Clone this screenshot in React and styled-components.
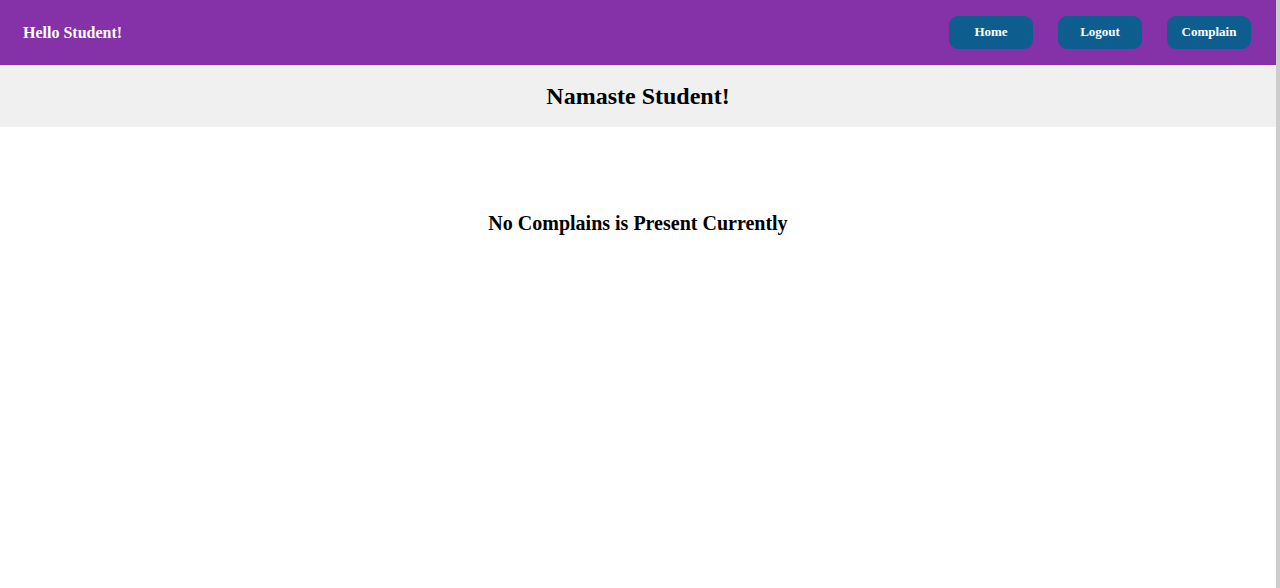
import styled, { createGlobalStyle } from 'styled-components';

const GlobalStyle = createGlobalStyle`
    html {
        background: #cdcdcd;
    }
    body {
        margin: 0;
        width: 1276px;
        min-height: 588px;
        background: #fff;
        font-family: "Liberation Serif", "Times New Roman", serif;
    }
`;

const NavBar = styled.nav`
    display: flex;
    align-items: center;
    justify-content: space-between;
    height: 65px;
    padding: 0 25px 0 23px;
    box-sizing: border-box;
    background-color: #8531a8;
`;

const Greeting = styled.div`
    color: #fff;
    font-size: 16px;
    font-weight: bold;
`;

const NavButtons = styled.div`
    display: flex;
    gap: 25px;
    margin-top: -1px;
`;

const NavButton = styled.button`
    width: 84px;
    height: 33px;
    border: none;
    border-radius: 9px;
    background-color: #0e5d8f;
    color: #fff;
    font-family: inherit;
    font-size: 13px;
    font-weight: bold;
    cursor: pointer;
`;

const Banner = styled.div`
    display: flex;
    align-items: center;
    justify-content: center;
    height: 62px;
    background-color: #f0f0f0;
`;

const BannerTitle = styled.h2`
    margin: 0;
    font-size: 24px;
    font-weight: bold;
    color: #000;
`;

const EmptyMessage = styled.h3`
    margin: 85px 0 0;
    text-align: center;
    font-size: 20px;
    font-weight: bold;
    color: #000;
`;

function App() {
    return (
        <>
            <GlobalStyle />
            <NavBar>
                <Greeting>Hello Student!</Greeting>
                <NavButtons>
                    <NavButton>Home</NavButton>
                    <NavButton>Logout</NavButton>
                    <NavButton>Complain</NavButton>
                </NavButtons>
            </NavBar>
            <Banner>
                <BannerTitle>Namaste Student!</BannerTitle>
            </Banner>
            <EmptyMessage>No Complains is Present Currently</EmptyMessage>
        </>
    );
}

export default App;
